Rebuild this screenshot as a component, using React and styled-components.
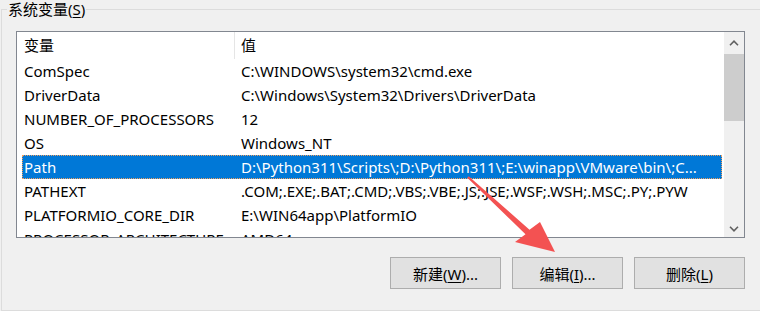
import React from "react";
import styled, { createGlobalStyle } from "styled-components";

const GlobalStyle = createGlobalStyle`
  html, body {
    margin: 0;
    padding: 0;
    background: #f0f0f0;
  }
  body {
    font-family: "Noto Sans", "Noto Sans CJK SC", sans-serif;
    font-size: 15px;
    color: #000;
  }
`;

const rows = [
  { name: "ComSpec", value: "C:\\WINDOWS\\system32\\cmd.exe" },
  { name: "DriverData", value: "C:\\Windows\\System32\\Drivers\\DriverData" },
  { name: "NUMBER_OF_PROCESSORS", value: "12" },
  { name: "OS", value: "Windows_NT" },
  {
    name: "Path",
    value: "D:\\Python311\\Scripts\\;D:\\Python311\\;E:\\winapp\\VMware\\bin\\;C...",
    selected: true,
  },
  { name: "PATHEXT", value: ".COM;.EXE;.BAT;.CMD;.VBS;.VBE;.JS;.JSE;.WSF;.WSH;.MSC;.PY;.PYW" },
  { name: "PLATFORMIO_CORE_DIR", value: "E:\\WIN64app\\PlatformIO" },
  { name: "PROCESSOR_ARCHITECTURE", value: "AMD64" },
];

const App = () => {
  return (
    <>
      <GlobalStyle />
      <Page>
        <GroupBox>
          <Legend>
            系统变量(<u>S</u>)
          </Legend>
          <Content>
            <ListView>
              <ListBody>
                <HeaderRow>
                  <HeaderCell width={217}>变量</HeaderCell>
                  <HeaderDivider />
                  <HeaderCell>值</HeaderCell>
                </HeaderRow>
                {rows.map((r) => (
                  <Row key={r.name} selected={r.selected}>
                    <NameCell>{r.name}</NameCell>
                    <ValueCell>{r.value}</ValueCell>
                  </Row>
                ))}
              </ListBody>
              <ScrollBar>
                <ScrollButton height={22}>
                  <Chevron viewBox="0 0 10 6">
                    <polyline points="1,5.2 5,1.2 9,5.2" />
                  </Chevron>
                </ScrollButton>
                <Thumb />
                <Track />
                <ScrollButton height={16}>
                  <Chevron viewBox="0 0 10 6">
                    <polyline points="1,0.8 5,4.8 9,0.8" />
                  </Chevron>
                </ScrollButton>
              </ScrollBar>
            </ListView>
            <ButtonRow>
              <Button>
                新建(<u>W</u>)...
              </Button>
              <Button>
                编辑(<u>I</u>)...
              </Button>
              <Button>
                删除(<u>L</u>)
              </Button>
            </ButtonRow>
          </Content>
        </GroupBox>
        <Arrow viewBox="0 0 760 311">
          <polygon points="468.7,176.2 529.5,229.7 540,222 555,252 515,242 525.5,234.3 467.3,177.8" />
        </Arrow>
      </Page>
    </>
  );
};

export default App;

const Page = styled.div`
  position: relative;
  width: 760px;
  height: 311px;
  overflow: hidden;
  background: #f0f0f0;
`;

const GroupBox = styled.fieldset`
  box-sizing: border-box;
  margin: 0 0 0 1px;
  padding: 0;
  width: 780px;
  height: 311px;
  border: 1px solid #dcdcdc;
  min-width: 0;
`;

const Legend = styled.legend`
  margin-left: 5px;
  padding: 0 1px;
  line-height: 19px;
  font-size: 15px;
  color: #000;
  u {
    text-underline-offset: 2px;
  }
`;

const Content = styled.div`
  display: flex;
  flex-direction: column;
  width: 729px;
  margin: 12px 0 0 14px;
  gap: 19px;
`;

const ListView = styled.div`
  box-sizing: border-box;
  display: flex;
  width: 729px;
  height: 207px;
  border: 1px solid #828790;
  background: #fff;
  overflow: hidden;
`;

const ListBody = styled.div`
  flex: 1;
  display: flex;
  flex-direction: column;
  min-width: 0;
`;

const HeaderRow = styled.div`
  display: flex;
  align-items: center;
  height: 27px;
  flex-shrink: 0;
`;

const HeaderCell = styled.div`
  box-sizing: border-box;
  width: ${(p) => (p.width ? `${p.width}px` : "auto")};
  flex: ${(p) => (p.width ? "none" : 1)};
  padding-left: ${(p) => (p.width ? 7 : 6)}px;
  line-height: 27px;
`;

const HeaderDivider = styled.div`
  width: 1px;
  height: 27px;
  background: #e5e5e5;
`;

const Row = styled.div`
  box-sizing: border-box;
  display: flex;
  align-items: center;
  flex-shrink: 0;
  height: 24px;
  width: 700px;
  margin-left: 5px;
  white-space: nowrap;
  background: ${(p) => (p.selected ? "#0078d7" : "transparent")};
  color: ${(p) => (p.selected ? "#fff" : "#000")};
  outline: ${(p) => (p.selected ? "1px dotted #f0a060" : "none")};
  outline-offset: -1px;
`;

const NameCell = styled.div`
  box-sizing: border-box;
  width: 217px;
  padding-left: 2px;
  overflow: hidden;
`;

const ValueCell = styled.div`
  flex: 1;
  padding-left: 2px;
  overflow: hidden;
`;

const ScrollBar = styled.div`
  display: flex;
  flex-direction: column;
  width: 20px;
  margin-left: 1px;
  background: #f0f0f0;
`;

const ScrollButton = styled.div`
  display: flex;
  align-items: center;
  justify-content: center;
  height: ${(p) => p.height}px;
  flex-shrink: 0;
`;

const Chevron = styled.svg`
  width: 10px;
  height: 6px;
  fill: none;
  stroke: #606060;
  stroke-width: 1.6;
`;

const Thumb = styled.div`
  height: 67px;
  flex-shrink: 0;
  background: #cdcdcd;
`;

const Track = styled.div`
  flex: 1;
`;

const ButtonRow = styled.div`
  display: flex;
  justify-content: flex-end;
  gap: 11px;
`;

const Button = styled.button`
  box-sizing: border-box;
  width: 111px;
  height: 32px;
  padding: 0;
  background: #e1e1e1;
  border: 1px solid #adadad;
  font-family: "Noto Sans", "Noto Sans CJK SC", sans-serif;
  font-size: 15px;
  color: #000;
  u {
    text-underline-offset: 2px;
  }
`;

const Arrow = styled.svg`
  position: absolute;
  left: 0;
  top: 0;
  width: 760px;
  height: 311px;
  pointer-events: none;
  fill: #f35252;
`;
